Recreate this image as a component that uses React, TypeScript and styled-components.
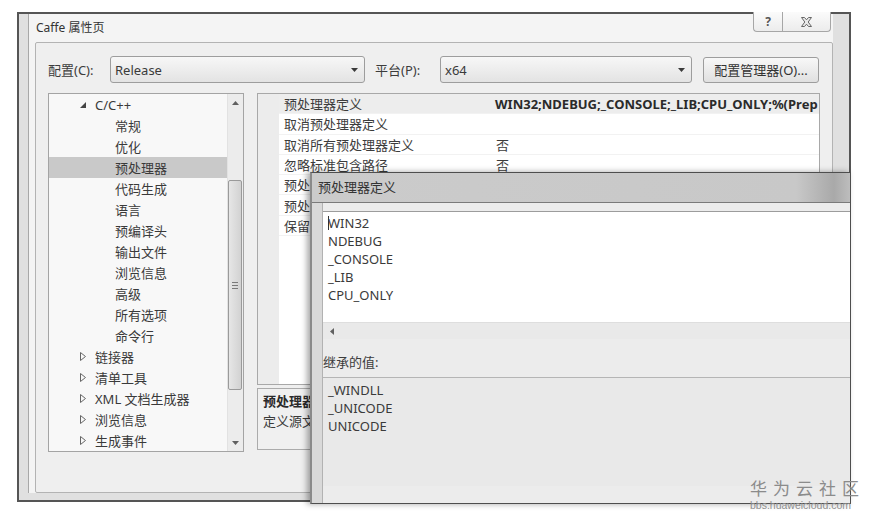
import React from "react";
import styled, { createGlobalStyle } from "styled-components";

const GlobalStyle = createGlobalStyle`
  html, body {
    margin: 0;
    padding: 0;
    background: #fff;
  }
  body {
    font-family: "Noto Sans", "Noto Sans CJK SC", sans-serif;
    font-size: 13px;
    color: #3a3a3a;
  }
`;

const Desktop = styled.div`
  position: relative;
  width: 872px;
  height: 518px;
  overflow: hidden;
  background: #fff;
`;

/* ---------- main property window ---------- */

const Window = styled.div`
  position: absolute;
  left: 17px;
  top: 12px;
  width: 834px;
  height: 490px;
  box-sizing: border-box;
  border: 2px solid #555;
  background: #e0e0e0;
  padding: 0 16px 7px 9px;
  display: flex;
`;

const Client = styled.div`
  flex: 1;
  display: flex;
  flex-direction: column;
  border-left: 1px solid #a8a8a8;
  background: #f4f4f4;
`;

const TitleBar = styled.div`
  height: 28px;
  display: flex;
  justify-content: space-between;
  align-items: flex-start;
`;

const TitleText = styled.span`
  padding-left: 7px;
  line-height: 27px;
  font-size: 12px;
  color: #333;
`;

const CaptionGroup = styled.div`
  display: flex;
  margin-top: -2px;
  margin-right: 2px;
`;

const CaptionButton = styled.div<{ $width: number }>`
  width: ${(p) => p.$width}px;
  height: 20px;
  box-sizing: border-box;
  border: 1px solid #a6a6a6;
  border-top: none;
  background: linear-gradient(#fbfbfb, #ececec);
  display: flex;
  align-items: center;
  justify-content: center;
  color: #555;
  font-weight: 700;
  font-size: 12px;

  &:first-child {
    border-bottom-left-radius: 4px;
    border-right: none;
  }
  &:last-child {
    border-bottom-right-radius: 4px;
  }
`;

const Panel = styled.div`
  flex: 1;
  margin-left: 6px;
  border: 1px solid #b3b3b3;
  border-radius: 2px;
  background: #efefef;
  padding: 13px 12px 0 12px;
  display: flex;
  flex-direction: column;
`;

const ConfigRow = styled.div`
  height: 27px;
  display: flex;
  align-items: center;
`;

const FieldLabel = styled.span<{ $width: number; $gap?: number }>`
  width: ${(p) => p.$width}px;
  margin-left: ${(p) => p.$gap ?? 0}px;
  flex: none;
  color: #3c3c3c;
`;

const Combo = styled.div<{ $width: number }>`
  width: ${(p) => p.$width}px;
  height: 27px;
  box-sizing: border-box;
  border: 1px solid #9d9d9d;
  border-radius: 3px;
  background: linear-gradient(#f7f7f7, #e3e3e3);
  padding: 0 6px 0 4px;
  display: flex;
  align-items: center;
  justify-content: space-between;
`;

const ManagerButton = styled.div`
  width: 116px;
  height: 26px;
  margin-left: 11px;
  box-sizing: border-box;
  border: 1px solid #9d9d9d;
  border-radius: 3px;
  background: linear-gradient(#f8f8f8, #e0e0e0);
  display: flex;
  align-items: center;
  justify-content: center;
  color: #333;
`;

const MainArea = styled.div`
  margin-top: 10px;
  display: flex;
  gap: 13px;
`;

/* ---------- category tree ---------- */

const Tree = styled.div`
  width: 196px;
  height: 359px;
  box-sizing: border-box;
  border: 1px solid #a4a4a4;
  background: #f8f8f8;
  display: flex;
`;

const TreeList = styled.div`
  flex: 1;
  overflow: hidden;
`;

const TreeRow = styled.div<{ $level: number; $selected?: boolean }>`
  height: 21px;
  display: flex;
  align-items: center;
  padding-left: ${(p) => (p.$level === 0 ? 31 : 66)}px;
  background: ${(p) => (p.$selected ? "#c9c9c9" : "transparent")};
  white-space: nowrap;
`;

const Expander = styled.span`
  width: 15px;
  flex: none;
  display: flex;
  align-items: center;
`;

const VScroll = styled.div`
  width: 15px;
  flex: none;
  background: #ececec;
  border-left: 1px solid #e2e2e2;
  display: flex;
  flex-direction: column;
`;

const ScrollArrow = styled.div`
  height: 17px;
  flex: none;
  display: flex;
  align-items: center;
  justify-content: center;
`;

const Track = styled.div`
  flex: 1;
`;

const Thumb = styled.div`
  margin: 69px 1px 0 0;
  height: 210px;
  box-sizing: border-box;
  border: 1px solid #9a9a9a;
  border-radius: 2px;
  background: linear-gradient(90deg, #e6e6e6, #d2d2d2);
  display: flex;
  flex-direction: column;
  align-items: center;
  justify-content: center;
  gap: 2px;
`;

const Grip = styled.span`
  width: 6px;
  height: 1px;
  background: #7a7a7a;
`;

/* ---------- property grid ---------- */

const RightColumn = styled.div`
  flex: 1;
  display: flex;
  flex-direction: column;
  gap: 3px;
`;

const Grid = styled.div`
  height: 292px;
  box-sizing: border-box;
  border: 1px solid #a8a8a8;
  background: #fff;
  overflow: hidden;
  display: flex;
  flex-direction: column;
`;

const GridRow = styled.div<{ $selected?: boolean }>`
  height: 20.3px;
  flex: none;
  display: grid;
  grid-template-columns: 21px 212px 1fr;
  background: ${(p) => (p.$selected ? "#ededed" : "#fff")};
`;

const Gutter = styled.div`
  background: #ececec;
`;

const GridCell = styled.div<{ $bold?: boolean }>`
  display: flex;
  align-items: center;
  padding-left: ${(p) => (p.$bold ? 4 : 5)}px;
  border-bottom: 1px solid #f2f2f2;
  white-space: nowrap;
  overflow: hidden;
  font-weight: ${(p) => (p.$bold ? 700 : 400)};
  color: ${(p) => (p.$bold ? "#2a2a2a" : "#3c3c3c")};
`;

const GridFill = styled.div`
  flex: 1;
  display: grid;
  grid-template-columns: 21px 1fr;
`;

const Description = styled.div`
  height: 62px;
  box-sizing: border-box;
  border: 1px solid #ababab;
  background: #f0f0f0;
  padding: 2px 5px;
  line-height: 20px;
`;

const DescTitle = styled.div`
  font-weight: 700;
  color: #2a2a2a;
`;

/* ---------- preprocessor definitions dialog ---------- */

const Dialog = styled.div`
  position: absolute;
  left: 310px;
  top: 172px;
  width: 541px;
  height: 332px;
  box-sizing: border-box;
  border: 1px solid #4e4e4e;
  border-left: 2px solid #8a8a8a;
  box-shadow: -3px 0 6px rgba(0, 0, 0, 0.35);
  background: #d9d9d9;
  display: flex;
  flex-direction: column;
`;

const DialogTitle = styled.div`
  height: 30px;
  flex: none;
  box-sizing: border-box;
  border-bottom: 1px solid #7a7a7a;
  background: linear-gradient(90deg, #cbcbcb 0%, #c8c8c8 90%, #a9a9a9 97%, #bdbdbd 100%);
  padding-left: 6px;
  line-height: 29px;
  color: #333;
`;

const DialogBody = styled.div`
  flex: 1;
  padding-left: 10px;
  display: flex;
`;

const DialogContent = styled.div`
  flex: 1;
  border-left: 1px solid #b2b2b2;
  background: #ececec;
  padding-top: 8px;
  display: flex;
  flex-direction: column;
`;

const Editor = styled.div`
  height: 128px;
  flex: none;
  box-sizing: border-box;
  border-top: 1px solid #9c9c9c;
  background: #fff;
  display: flex;
  flex-direction: column;
`;

const EditorLines = styled.div`
  flex: 1;
  padding: 2px 5px 0;
  line-height: 18px;
  color: #3a3a3a;
`;

const Caret = styled.span`
  display: inline-block;
  width: 1px;
  height: 14px;
  margin-right: -1px;
  vertical-align: -2px;
  background: #333;
`;

const HScroll = styled.div`
  height: 16px;
  flex: none;
  border-top: 1px solid #dedede;
  background: #e9e9e9;
  display: flex;
  align-items: center;
  padding-left: 7px;
`;

const InheritedLabel = styled.div`
  margin-top: 15px;
  line-height: 16px;
  color: #3c3c3c;
`;

const InheritedBox = styled.div`
  margin-top: 7px;
  height: 109px;
  flex: none;
  box-sizing: border-box;
  border-top: 1px solid #b5b5b5;
  background: #e9e9e9;
  padding: 3px 5px 0;
  line-height: 18px;
  color: #3a3a3a;
`;

/* ---------- site mark ---------- */

const SiteMark = styled.div`
  position: absolute;
  left: 750px;
  top: 477px;
  display: flex;
  flex-direction: column;
  align-items: flex-start;
`;

const SiteName = styled.span`
  font-family: "Noto Sans CJK SC", sans-serif;
  font-size: 17px;
  line-height: 22px;
  letter-spacing: 6px;
  color: #8b8b8b;
`;

const SiteUrl = styled.span`
  font-family: "Liberation Sans", sans-serif;
  font-size: 10.5px;
  line-height: 12px;
  color: #8f8f8f;
`;

/* ---------- glyphs ---------- */

const DropArrow = () => (
  <svg width="7" height="4" viewBox="0 0 7 4">
    <path d="M0 0h7L3.5 4z" fill="#3a3a3a" />
  </svg>
);

const SmallArrow = ({ dir }: { dir: "up" | "down" | "left" }) => {
  const d =
    dir === "up" ? "M0 4h7L3.5 0z" : dir === "down" ? "M0 0h7L3.5 4z" : "M4 0v7L0 3.5z";
  const w = dir === "left" ? 4 : 7;
  const h = dir === "left" ? 7 : 4;
  return (
    <svg width={w} height={h} viewBox={`0 0 ${w} ${h}`}>
      <path d={d} fill="#606060" />
    </svg>
  );
};

const OpenMark = () => (
  <svg width="6" height="6" viewBox="0 0 6 6">
    <path d="M6 0v6H0z" fill="#444" />
  </svg>
);

const ClosedMark = () => (
  <svg width="6" height="9" viewBox="0 0 6 9">
    <path d="M0.5 0.5v8l5-4z" fill="none" stroke="#666" strokeWidth="1" />
  </svg>
);

const CloseGlyph = () => (
  <svg width="11" height="10" viewBox="0 0 11 10">
    <path
      d="M0.5 0.5h3l2 2.3 2-2.3h3l-3.3 4.5 3.3 4.5h-3l-2-2.3-2 2.3h-3l3.3-4.5z"
      fill="#e9e9e9"
      stroke="#666"
      strokeWidth="1"
    />
  </svg>
);

type TreeItem = { label: string; level: number; open?: boolean; selected?: boolean };

const treeItems: TreeItem[] = [
  { label: "C/C++", level: 0, open: true },
  { label: "常规", level: 1 },
  { label: "优化", level: 1 },
  { label: "预处理器", level: 1, selected: true },
  { label: "代码生成", level: 1 },
  { label: "语言", level: 1 },
  { label: "预编译头", level: 1 },
  { label: "输出文件", level: 1 },
  { label: "浏览信息", level: 1 },
  { label: "高级", level: 1 },
  { label: "所有选项", level: 1 },
  { label: "命令行", level: 1 },
  { label: "链接器", level: 0 },
  { label: "清单工具", level: 0 },
  { label: "XML 文档生成器", level: 0 },
  { label: "浏览信息", level: 0 },
  { label: "生成事件", level: 0 },
];

const properties: { name: string; value: string }[] = [
  { name: "预处理器定义", value: "WIN32;NDEBUG;_CONSOLE;_LIB;CPU_ONLY;%(Prep" },
  { name: "取消预处理器定义", value: "" },
  { name: "取消所有预处理器定义", value: "否" },
  { name: "忽略标准包含路径", value: "否" },
  { name: "预处理到文件", value: "否" },
  { name: "预处理取消显示行号", value: "否" },
  { name: "保留注释", value: "否" },
];

const definitions = ["WIN32", "NDEBUG", "_CONSOLE", "_LIB", "CPU_ONLY"];
const inherited = ["_WINDLL", "_UNICODE", "UNICODE"];

const App = () => {
  return (
    <Desktop>
      <GlobalStyle />
      <Window>
        <Client>
          <TitleBar>
            <TitleText>Caffe 属性页</TitleText>
            <CaptionGroup>
              <CaptionButton $width={29}>?</CaptionButton>
              <CaptionButton $width={49}>
                <CloseGlyph />
              </CaptionButton>
            </CaptionGroup>
          </TitleBar>
          <Panel>
            <ConfigRow>
              <FieldLabel $width={62}>配置(C):</FieldLabel>
              <Combo $width={255}>
                <span>Release</span>
                <DropArrow />
              </Combo>
              <FieldLabel $width={65} $gap={10}>
                平台(P):
              </FieldLabel>
              <Combo $width={252}>
                <span>x64</span>
                <DropArrow />
              </Combo>
              <ManagerButton>配置管理器(O)...</ManagerButton>
            </ConfigRow>
            <MainArea>
              <Tree>
                <TreeList>
                  {treeItems.map((item, i) => (
                    <TreeRow key={i} $level={item.level} $selected={item.selected}>
                      {item.level === 0 && (
                        <Expander>{item.open ? <OpenMark /> : <ClosedMark />}</Expander>
                      )}
                      {item.label}
                    </TreeRow>
                  ))}
                </TreeList>
                <VScroll>
                  <ScrollArrow>
                    <SmallArrow dir="up" />
                  </ScrollArrow>
                  <Track>
                    <Thumb>
                      <Grip />
                      <Grip />
                      <Grip />
                    </Thumb>
                  </Track>
                  <ScrollArrow>
                    <SmallArrow dir="down" />
                  </ScrollArrow>
                </VScroll>
              </Tree>
              <RightColumn>
                <Grid>
                  {properties.map((p, i) => (
                    <GridRow key={i} $selected={i === 0}>
                      <Gutter />
                      <GridCell>{p.name}</GridCell>
                      <GridCell $bold={i === 0}>{p.value}</GridCell>
                    </GridRow>
                  ))}
                  <GridFill>
                    <Gutter />
                    <div />
                  </GridFill>
                </Grid>
                <Description>
                  <DescTitle>预处理器定义</DescTitle>
                  <div>定义源文件的预处理符号。</div>
                </Description>
              </RightColumn>
            </MainArea>
          </Panel>
        </Client>
      </Window>

      <Dialog>
        <DialogTitle>预处理器定义</DialogTitle>
        <DialogBody>
          <DialogContent>
            <Editor>
              <EditorLines>
                {definitions.map((d, i) => (
                  <div key={d}>
                    {i === 0 && <Caret />}
                    {d}
                  </div>
                ))}
              </EditorLines>
              <HScroll>
                <SmallArrow dir="left" />
              </HScroll>
            </Editor>
            <InheritedLabel>继承的值:</InheritedLabel>
            <InheritedBox>
              {inherited.map((d) => (
                <div key={d}>{d}</div>
              ))}
            </InheritedBox>
          </DialogContent>
        </DialogBody>
      </Dialog>

      <SiteMark>
        <SiteName>华为云社区</SiteName>
        <SiteUrl>bbs.huaweicloud.com</SiteUrl>
      </SiteMark>
    </Desktop>
  );
};

export default App;
